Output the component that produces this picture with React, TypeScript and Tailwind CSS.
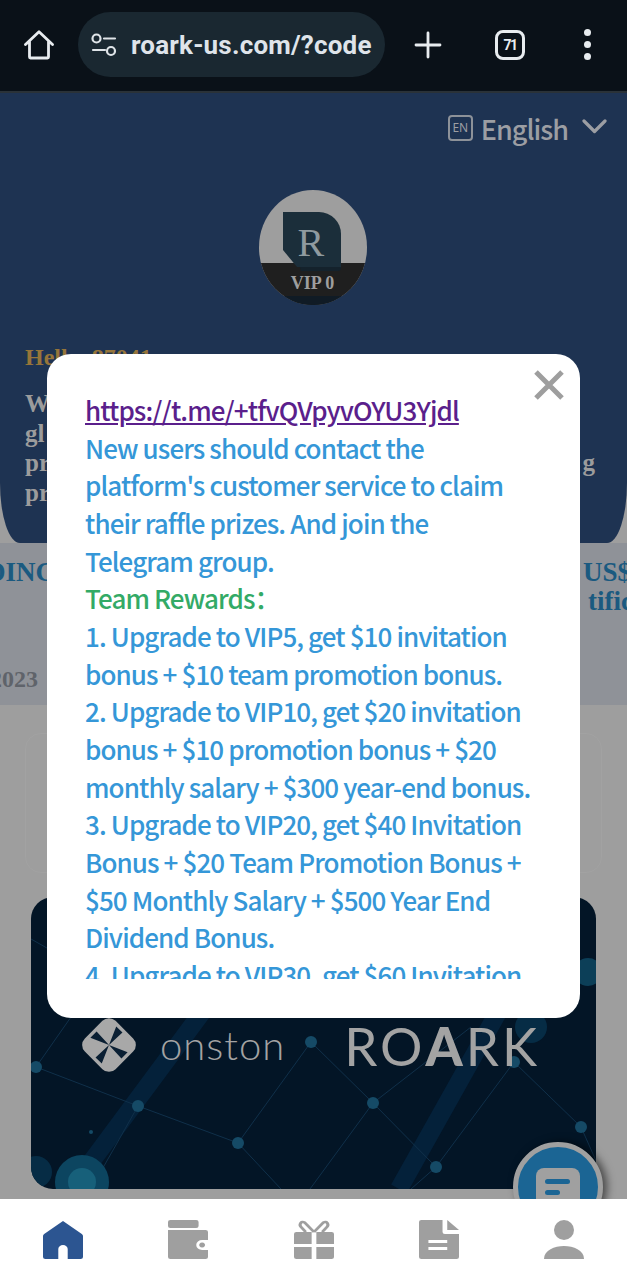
import React from "react";

const SERIF = "font-['Liberation_Serif','DejaVu_Serif',serif]";

function BrowserBar() {
  return (
    <div className="flex h-[93px] shrink-0 items-center border-b-2 border-[#2a3238] bg-[#0a1118] pb-[2px] font-['Roboto',sans-serif] text-[#e8ecef]">
      <div className="flex w-[78px] shrink-0 justify-center">
        <svg width="30" height="30" viewBox="0 0 30 30" fill="none" stroke="currentColor" strokeWidth="2.8" strokeLinejoin="round" strokeLinecap="round">
          <path d="M1.5 14.5 15 1.8 28.5 14.5M5.5 11.5V27a1 1 0 0 0 1 1h17a1 1 0 0 0 1-1V11.5" />
        </svg>
      </div>
      <div className="flex h-[65px] w-[307px] shrink-0 items-center rounded-full bg-[#1a2831] pl-[13px]">
        <svg width="26" height="24" viewBox="0 0 26 24" fill="none" stroke="#dfe4e8" strokeWidth="2.2" strokeLinecap="round">
          <circle cx="5.5" cy="5.5" r="4" />
          <path d="M13 5.5h11M2 17h12" />
          <circle cx="20" cy="18" r="4" />
        </svg>
        <span className="ml-[14px] whitespace-nowrap text-[26px] font-bold leading-none tracking-[0.2px] text-[#dfe4ea]">roark-us.com/?code</span>
      </div>
      <div className="flex flex-1 items-center pl-[29px]">
        <svg width="28" height="28" viewBox="0 0 28 28" fill="none" stroke="currentColor" strokeWidth="2.8" strokeLinecap="round">
          <path d="M14 2v24M2 14h24" />
        </svg>
        <div className="ml-[53px] flex h-[30px] w-[30px] items-center justify-center rounded-[8px] border-[3px] border-[#e8ecef] text-[14px] font-bold leading-none tracking-[-1.5px]">71</div>
        <div className="ml-[59px] flex flex-col gap-[5px]">
          <span className="h-[7px] w-[7px] rounded-full bg-[#e8ecef]" />
          <span className="h-[7px] w-[7px] rounded-full bg-[#e8ecef]" />
          <span className="h-[7px] w-[7px] rounded-full bg-[#e8ecef]" />
        </div>
      </div>
    </div>
  );
}

function Avatar() {
  return (
    <div className="relative mx-auto h-[115px] w-[108px] -translate-x-[1px] overflow-hidden rounded-[54px/57px] bg-[#9e9e9e]">
      <div className="absolute bottom-0 left-0 right-0 h-[42px] bg-[#1f1f1f] pt-[10px] text-center">
        <span className={`block text-[18px] font-bold leading-[20px] text-[#9e9e9e] ${SERIF}`}>VIP 0</span>
      </div>
      <div className="absolute bottom-0 left-0 right-0 h-[9px] bg-[#101b25]" />
      <svg className="absolute left-[24px] top-[22px]" width="58" height="60" viewBox="0 0 58 60">
        <path d="M12 40h46v16a3 3 0 0 1-3 3H18Z" fill="#14222c" />
        <path d="M0 0h36a22 22 0 0 1 22 22v33H14L0 38Z" fill="#1b2e3a" />
      </svg>
      <span className={`absolute left-[39px] top-[33px] text-[40px] leading-none text-[#8f9a9f] ${SERIF}`}>R</span>
    </div>
  );
}

function Hero() {
  return (
    <section className="h-[450px] shrink-0 rounded-b-[20px_60px] bg-[#1e3352] px-[25px]">
      <div className="-mr-[5px] flex h-[97px] items-start justify-end pt-[22px] font-['Noto_Sans_CJK_SC','Noto_Sans',sans-serif] text-[#9c9ea3]">
        <div className="flex h-[26px] w-[25px] items-center justify-center rounded-[4px] border-2 border-[#8d9299] font-['Noto_Sans',sans-serif] text-[12px] leading-none">EN</div>
        <span className="ml-[8px] text-[27px] font-medium leading-[28px] tracking-[-1px]">English</span>
        <svg className="ml-[14px] mt-[3px]" width="25" height="16" viewBox="0 0 25 16" fill="none" stroke="#9c9ea3" strokeWidth="3.2" strokeLinecap="round" strokeLinejoin="round">
          <path d="M2 3l10.5 10.5L23 3" />
        </svg>
      </div>
      <Avatar />
      <div className={`mt-[39px] text-[24px] font-bold leading-[27px] text-[#96753a] ${SERIF}`}>Hello, 87041</div>
      <div className={`mt-[18px] text-[25px] font-bold leading-[29.5px] text-[#9c9c9c] ${SERIF}`}>
        <div>W</div>
        <div>gl</div>
        <div className="flex justify-between"><span>pr</span><span className="mr-[7px]">g</span></div>
        <div>pr</div>
      </div>
    </section>
  );
}

function Ticker() {
  return (
    <section className={`flex h-[162px] shrink-0 flex-col overflow-hidden bg-[#8f9298] pt-[15px] ${SERIF}`}>
      <div className="flex justify-between text-[27px] font-bold leading-[29px] text-[#1b5a80]">
        <span className="-ml-[14px]">DING</span>
        <span className="-mr-[4px]">US$</span>
      </div>
      <div className="flex justify-end text-[27px] font-bold leading-[29px] text-[#1b5a80]">
        <span className="-mr-[6px]">tific</span>
      </div>
      <div className="-ml-[10px] mt-[50px] text-[24px] font-bold leading-[26px] text-[#5f636a]">2023</div>
    </section>
  );
}

function Network() {
  const nodes: [number, number, number][] = [
    [280, 145, 6], [5, 170, 6], [107, 209, 6], [207, 246, 6], [342, 206, 6], [405, 270, 6], [550, 230, 6], [483, 165, 6], [60, 235, 2],
  ];
  return (
    <svg className="absolute inset-0" width="565" height="292" viewBox="0 0 565 292">
      <path d="M40 292 175 110M368 292 470 110" stroke="#04213a" strokeWidth="18" />
      <path d="M0 42 90 93M5 170 107 209 207 246 250 292M5 170 40 120M207 246 280 145M280 145 342 206 279 292M342 206 405 270M483 165 405 270 380 292M483 165 550 230 570 275M107 209 60 292M342 206 440 130" stroke="#10304a" strokeWidth="1" fill="none" />
      {nodes.map(([x, y, r], i) => (
        <circle key={i} cx={x} cy={y} r={r} fill="#154a66" />
      ))}
      <circle cx="51" cy="285" r="27" fill="#0c4560" />
      <circle cx="51" cy="285" r="14" fill="#17607a" />
      <circle cx="5" cy="275" r="16" fill="#062c45" />
      <circle cx="557" cy="75" r="14" fill="#0c3f58" />
      <circle cx="500" cy="130" r="16" fill="#062c45" />
    </svg>
  );
}

function Card() {
  return (
    <section className="relative mx-[31px] h-[292px] overflow-hidden rounded-[22px] bg-[#031526]">
      <Network />
      <div className="absolute left-[48px] top-[118px] flex items-center text-[#a3a3a3]">
        <svg width="60" height="60" viewBox="0 0 58 58">
          <rect x="8" y="8" width="42" height="42" rx="9" transform="rotate(45 29 29)" fill="#a8a8a8" />
          <path d="M29 29 36 11l6 6ZM29 29l18 7-6 6ZM29 29l-7 18-6-6ZM29 29 11 22l6-6Z" fill="#0a1f33" />
        </svg>
        <span className="ml-[21px] font-['Lato',sans-serif] text-[40px] font-light leading-none tracking-[1px]">onston</span>
        <span className="ml-[59px] font-['Lato',sans-serif] text-[53px] font-normal leading-none tracking-[3px]">
          RO<span className="font-black">A</span>RK
        </span>
      </div>
    </section>
  );
}

function ChatButton() {
  return (
    <div className="absolute bottom-[-33px] right-[24px] flex h-[90px] w-[90px] items-start justify-center rounded-full border-[5px] border-[#a0a0a0] bg-[#1b6594] pt-[21px] shadow-[4px_0_8px_rgba(0,0,0,0.55)]">
      <div className="flex h-[50px] w-[44px] flex-col gap-[6px] rounded-[8px] bg-[#a0a0a0] px-[9px] pt-[11px]">
        <span className="h-[5px] w-[25px] rounded-full bg-[#1b6594]" />
        <span className="h-[5px] w-[15px] rounded-full bg-[#1b6594]" />
      </div>
    </div>
  );
}

function NavIcon({ name }: { name: string }) {
  const color = name === "home" ? "#2c5591" : "#9f9f9f";
  return (
    <svg width="40" height="39" viewBox="3 0 34 39" preserveAspectRatio="none" fill={color}>
      {name === "home" && (
        <path fillRule="evenodd" d="M20 1 36 14c.7.6 1 1.2 1 2V37a2 2 0 0 1-2 2H5a2 2 0 0 1-2-2V16c0-.8.3-1.4 1-2ZM16 39h8V29a4 4 0 0 0-8 0Z" />
      )}
      {name === "wallet" && (
        <>
          <rect x="3" y="0" width="26" height="8" rx="2" />
          <path fillRule="evenodd" d="M3 10h32a2 2 0 0 1 2 2v8h-5a5 5 0 0 0 0 10h5v7a2 2 0 0 1-2 2H5a2 2 0 0 1-2-2ZM32 22.500a2.500 2.500 0 1 0 .01 0Z" />
        </>
      )}
      {name === "gift" && (
        <>
          <path d="M3 14a2 2 0 0 1 2-2h13v12H3ZM22 12h13a2 2 0 0 1 2 2v10H22ZM3 27h15v12H5a2 2 0 0 1-2-2ZM22 27h15v10a2 2 0 0 1-2 2H22Z" />
          <path d="M20 12 12 2.500c-3-2-5 2-3 4.500l4 5M20 12l8-9.500c3-2 5 2 3 4.500l-4 5" fill="none" stroke={color} strokeWidth="2.6" />
        </>
      )}
      {name === "doc" && (
        <>
          <path fillRule="evenodd" d="M5 0h18v12a2 2 0 0 0 2 2h12v23a2 2 0 0 1-2 2H5a2 2 0 0 1-2-2V2a2 2 0 0 1 2-2ZM11 20v3h16v-3ZM11 27v3h16v-3Z" />
          <path d="M27 0 37 10H27Z" />
        </>
      )}
      {name === "user" && (
        <>
          <ellipse cx="20" cy="10" rx="8.500" ry="10" />
          <path d="M3 39c0-9 9-13 17-13s17 4 17 13Z" />
        </>
      )}
    </svg>
  );
}

function BottomNav() {
  return (
    <nav className="relative z-10 flex h-[81px] shrink-0 items-start justify-between bg-white px-[43px] pt-[21px]">
      {["home", "wallet", "gift", "doc", "user"].map((n) => (
        <NavIcon key={n} name={n} />
      ))}
    </nav>
  );
}

function Modal() {
  return (
    <div className="absolute left-[47px] top-[354px] z-20 h-[664px] w-[533px] rounded-[24px] bg-white pl-[38px] pr-[40px] pt-[37px]">
      <svg className="absolute right-[15px] top-[16px]" width="32" height="30" viewBox="0 0 32 30" fill="none" stroke="#9e9e9e" strokeWidth="5">
        <path d="M3 2l26 26M29 2 3 28" />
      </svg>
      <div className="h-[588px] overflow-hidden font-['Noto_Sans_CJK_SC','Noto_Sans',sans-serif] text-[26px] font-medium leading-[37.67px] tracking-[-0.9px] text-[#3597d8]">
        <a className="block text-[#5b1f8c] underline" href="#">https://t.me/+tfvQVpyvOYU3Yjdl</a>
        <div>New users should contact the platform's customer service to claim their raffle prizes. And join the Telegram group.</div>
        <div className="text-[#33aa66]">Team Rewards：</div>
        <div>1. Upgrade to VIP5, get $10 invitation bonus + $10 team promotion bonus.</div>
        <div>2. Upgrade to VIP10, get $20 invitation bonus + $10 promotion bonus + $20 monthly salary + $300 year-end bonus.</div>
        <div>3. Upgrade to VIP20, get $40 Invitation Bonus + $20 Team Promotion Bonus + $50 Monthly Salary + $500 Year End Dividend Bonus.</div>
        <div>4. Upgrade to VIP30, get $60 Invitation</div>
      </div>
    </div>
  );
}

export default function App() {
  return (
    <div className="relative flex h-[1280px] w-[627px] flex-col overflow-hidden bg-[#9e9e9e]">
      <BrowserBar />
      <main className="relative flex min-h-0 flex-1 flex-col">
        <Hero />
        <Ticker />
        <div className="h-[192px] shrink-0 pt-[28px]">
          <div className="mx-[25px] h-[140px] rounded-[16px] border border-[#a2a2a2]" />
        </div>
        <Card />
        <ChatButton />
      </main>
      <BottomNav />
      <Modal />
    </div>
  );
}
